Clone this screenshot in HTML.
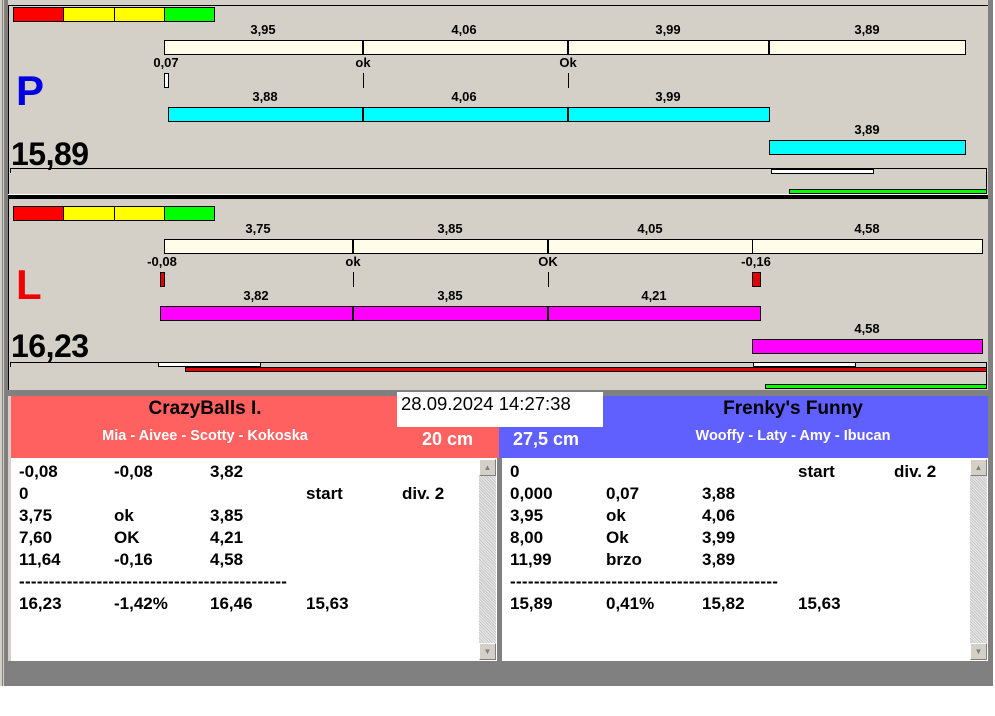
<!DOCTYPE html>
<html><head><meta charset="utf-8">
<style>
*{margin:0;padding:0;box-sizing:border-box}
body{width:995px;height:716px;background:#fff;position:relative;overflow:hidden;font-family:"Liberation Sans",Arial,sans-serif}
.a{position:absolute}
.lb{position:absolute;font-size:13px;font-weight:bold;color:#000;transform:translateX(-50%);white-space:nowrap;line-height:14px}
.bar{position:absolute;border:1px solid #000;height:15px}
.dv{position:absolute;width:2px;background:#000}
.tk{position:absolute;width:1px;background:#000;height:15px}
.row{position:absolute;font-size:17px;font-weight:bold;line-height:22px;white-space:nowrap}
.sb{position:absolute;width:17px;background:repeating-linear-gradient(45deg,#e8e8e8 0 1px,#c8c8c8 1px 2px)}
.sbb{position:absolute;left:0;width:17px;height:17px;background:#d4d0c8;border:1px solid;border-color:#fff #808080 #808080 #fff;font-size:8px;color:#808080;text-align:center;line-height:15px}
</style></head><body>
<div class="a" style="left:0;top:0;width:993px;height:686px;background:#d4d0c8"></div>
<div class="a" style="left:2px;top:0;width:1px;height:686px;background:#808080"></div>
<div class="a" style="left:4px;top:0;width:4px;height:686px;background:#808080"></div>
<div class="a" style="left:8px;top:5px;width:1px;height:386px;background:#000"></div>
<div class="a" style="left:8px;top:5px;width:980px;height:1px;background:#000"></div>
<div class="a" style="left:988px;top:0;width:5px;height:686px;background:#808080"></div>
<div class="a" style="left:8px;top:390px;width:985px;height:6px;background:#808080"></div>
<div class="a" style="left:8px;top:661px;width:985px;height:25px;background:#808080"></div>
<div class="a" style="left:497px;top:456px;width:5px;height:206px;background:#808080"></div>

<div class="bar" style="left:13px;top:7px;width:51px;background:#f00"></div>
<div class="bar" style="left:63px;top:7px;width:52px;background:#ff0"></div>
<div class="bar" style="left:114px;top:7px;width:51px;background:#ff0"></div>
<div class="bar" style="left:164px;top:7px;width:51px;background:#0f0"></div>

<div class="lb" style="left:263px;top:23px">3,95</div>
<div class="lb" style="left:464px;top:23px">4,06</div>
<div class="lb" style="left:668px;top:23px">3,99</div>
<div class="lb" style="left:867px;top:23px">3,89</div>
<div class="bar" style="left:164px;top:40px;width:802px;background:#fffdea"></div>
<div class="dv" style="left:362px;top:40px;height:15px"></div>
<div class="dv" style="left:567px;top:40px;height:15px"></div>
<div class="dv" style="left:768px;top:40px;height:15px"></div>
<div class="lb" style="left:166px;top:56px">0,07</div>
<div class="lb" style="left:363px;top:56px">ok</div>
<div class="lb" style="left:568px;top:56px">Ok</div>
<div class="bar" style="left:164px;top:73px;width:5px;background:#fff"></div>
<div class="tk" style="left:363px;top:73px"></div>
<div class="tk" style="left:568px;top:73px"></div>
<div class="lb" style="left:265px;top:90px">3,88</div>
<div class="lb" style="left:464px;top:90px">4,06</div>
<div class="lb" style="left:668px;top:90px">3,99</div>
<div class="bar" style="left:168px;top:107px;width:602px;background:#0ff"></div>
<div class="dv" style="left:362px;top:107px;height:15px"></div>
<div class="dv" style="left:567px;top:107px;height:15px"></div>
<div class="lb" style="left:867px;top:123px">3,89</div>
<div class="bar" style="left:769px;top:140px;width:197px;background:#0ff"></div>
<div class="a" style="left:16px;top:68px;font-size:42px;font-weight:bold;color:#0000e0;line-height:46px">P</div>
<div class="a" style="left:11px;top:137px;font-size:32px;font-weight:bold;line-height:34px;letter-spacing:-0.5px">15,89</div>
<div class="a" style="left:10px;top:168px;width:977px;height:1px;background:#000"></div>
<div class="a" style="left:10px;top:168px;width:1px;height:5px;background:#000"></div>
<div class="a" style="left:986px;top:168px;width:1px;height:24px;background:#000"></div>
<div class="a" style="left:771px;top:169px;width:103px;height:5px;background:#fff;border:1px solid #000"></div>
<div class="a" style="left:789px;top:189px;width:198px;height:5px;background:#0f0;border:1px solid #000"></div>
<div class="a" style="left:8px;top:194px;width:980px;height:1px;background:#fff"></div>
<div class="a" style="left:8px;top:195px;width:980px;height:4px;background:#000"></div>

<div class="bar" style="left:13px;top:206px;width:51px;background:#f00"></div>
<div class="bar" style="left:63px;top:206px;width:52px;background:#ff0"></div>
<div class="bar" style="left:114px;top:206px;width:51px;background:#ff0"></div>
<div class="bar" style="left:164px;top:206px;width:51px;background:#0f0"></div>
<div class="lb" style="left:258px;top:222px">3,75</div>
<div class="lb" style="left:450px;top:222px">3,85</div>
<div class="lb" style="left:650px;top:222px">4,05</div>
<div class="lb" style="left:867px;top:222px">4,58</div>
<div class="bar" style="left:164px;top:239px;width:819px;background:#fffdea"></div>
<div class="dv" style="left:352px;top:239px;height:15px"></div>
<div class="dv" style="left:547px;top:239px;height:15px"></div>
<div class="a" style="left:752px;top:239px;width:1px;height:15px;background:#000"></div>
<div class="lb" style="left:162px;top:255px">-0,08</div>
<div class="lb" style="left:353px;top:255px">ok</div>
<div class="lb" style="left:548px;top:255px">OK</div>
<div class="lb" style="left:756px;top:255px">-0,16</div>
<div class="bar" style="left:160px;top:272px;width:5px;background:#e00000"></div>
<div class="tk" style="left:353px;top:272px"></div>
<div class="tk" style="left:548px;top:272px"></div>
<div class="bar" style="left:752px;top:272px;width:9px;background:#e00000"></div>
<div class="lb" style="left:256px;top:289px">3,82</div>
<div class="lb" style="left:450px;top:289px">3,85</div>
<div class="lb" style="left:654px;top:289px">4,21</div>
<div class="bar" style="left:160px;top:306px;width:601px;background:#f0f"></div>
<div class="dv" style="left:352px;top:306px;height:15px"></div>
<div class="dv" style="left:547px;top:306px;height:15px"></div>
<div class="lb" style="left:867px;top:322px">4,58</div>
<div class="bar" style="left:752px;top:339px;width:231px;background:#f0f"></div>
<div class="a" style="left:16px;top:262px;font-size:42px;font-weight:bold;color:#f00000;line-height:46px">L</div>
<div class="a" style="left:11px;top:329px;font-size:32px;font-weight:bold;line-height:34px;letter-spacing:-0.5px">16,23</div>
<div class="a" style="left:10px;top:362px;width:977px;height:1px;background:#000"></div>
<div class="a" style="left:10px;top:362px;width:1px;height:5px;background:#000"></div>
<div class="a" style="left:986px;top:362px;width:1px;height:26px;background:#000"></div>
<div class="a" style="left:158px;top:362px;width:103px;height:5px;background:#fff;border:1px solid #000"></div>
<div class="a" style="left:753px;top:362px;width:103px;height:5px;background:#fff;border:1px solid #000"></div>
<div class="a" style="left:185px;top:367px;width:802px;height:5px;background:#e00000;border:1px solid #000"></div>
<div class="a" style="left:765px;top:384px;width:222px;height:5px;background:#0f0;border:1px solid #000"></div>

<div class="a" style="left:11px;top:396px;width:488px;height:62px;background:#ff6060"></div>
<div class="a" style="left:499px;top:396px;width:489px;height:62px;background:#6060ff"></div>
<div class="a" style="left:11px;top:398px;width:388px;text-align:center;font-size:19px;font-weight:bold;line-height:22px">CrazyBalls I.</div>
<div class="a" style="left:11px;top:428px;width:388px;text-align:center;font-size:14.5px;font-weight:bold;color:#fff;line-height:16px">Mia - Aivee - Scotty - Kokoska</div>
<div class="a" style="left:422px;top:429px;font-size:18px;font-weight:bold;color:#fff;line-height:20px">20 cm</div>
<div class="a" style="left:513px;top:429px;font-size:18px;font-weight:bold;color:#fff;line-height:20px">27,5 cm</div>
<div class="a" style="left:603px;top:398px;width:380px;text-align:center;font-size:19px;font-weight:bold;color:#000;line-height:22px">Frenky's Funny</div>
<div class="a" style="left:603px;top:428px;width:380px;text-align:center;font-size:14.5px;font-weight:bold;color:#fff;line-height:16px">Wooffy - Laty - Amy - Ibucan</div>
<div class="a" style="left:397px;top:392px;width:206px;height:35px;background:#fff;font-size:18.5px;line-height:24px;padding-left:4px">28.09.2024 14:27:38</div>

<div class="a" style="left:11px;top:458px;width:486px;height:203px;background:#fff"></div>
<div class="a" style="left:502px;top:458px;width:486px;height:203px;background:#fff"></div>
<div class="sb" style="left:479px;top:459px;height:201px"><div class="sbb" style="top:0">▲</div><div class="sbb" style="bottom:0">▼</div></div>
<div class="sb" style="left:970px;top:459px;height:201px"><div class="sbb" style="top:0">▲</div><div class="sbb" style="bottom:0">▼</div></div>

<div class="row" style="left:19px;top:461px">-0,08</div><div class="row" style="left:114px;top:461px">-0,08</div><div class="row" style="left:210px;top:461px">3,82</div>
<div class="row" style="left:19px;top:483px">0</div><div class="row" style="left:306px;top:483px">start</div><div class="row" style="left:402px;top:483px">div. 2</div>
<div class="row" style="left:19px;top:505px">3,75</div><div class="row" style="left:114px;top:505px">ok</div><div class="row" style="left:210px;top:505px">3,85</div>
<div class="row" style="left:19px;top:527px">7,60</div><div class="row" style="left:114px;top:527px">OK</div><div class="row" style="left:210px;top:527px">4,21</div>
<div class="row" style="left:19px;top:549px">11,64</div><div class="row" style="left:114px;top:549px">-0,16</div><div class="row" style="left:210px;top:549px">4,58</div>
<div class="row" style="left:19px;top:571px;letter-spacing:0.3px">---------------------------------------------</div>
<div class="row" style="left:19px;top:593px">16,23</div><div class="row" style="left:114px;top:593px">-1,42%</div><div class="row" style="left:210px;top:593px">16,46</div><div class="row" style="left:306px;top:593px">15,63</div>

<div class="row" style="left:510px;top:461px">0</div><div class="row" style="left:798px;top:461px">start</div><div class="row" style="left:894px;top:461px">div. 2</div>
<div class="row" style="left:510px;top:483px">0,000</div><div class="row" style="left:606px;top:483px">0,07</div><div class="row" style="left:702px;top:483px">3,88</div>
<div class="row" style="left:510px;top:505px">3,95</div><div class="row" style="left:606px;top:505px">ok</div><div class="row" style="left:702px;top:505px">4,06</div>
<div class="row" style="left:510px;top:527px">8,00</div><div class="row" style="left:606px;top:527px">Ok</div><div class="row" style="left:702px;top:527px">3,99</div>
<div class="row" style="left:510px;top:549px">11,99</div><div class="row" style="left:606px;top:549px">brzo</div><div class="row" style="left:702px;top:549px">3,89</div>
<div class="row" style="left:510px;top:571px;letter-spacing:0.3px">---------------------------------------------</div>
<div class="row" style="left:510px;top:593px">15,89</div><div class="row" style="left:606px;top:593px">0,41%</div><div class="row" style="left:702px;top:593px">15,82</div><div class="row" style="left:798px;top:593px">15,63</div>
</body></html>
